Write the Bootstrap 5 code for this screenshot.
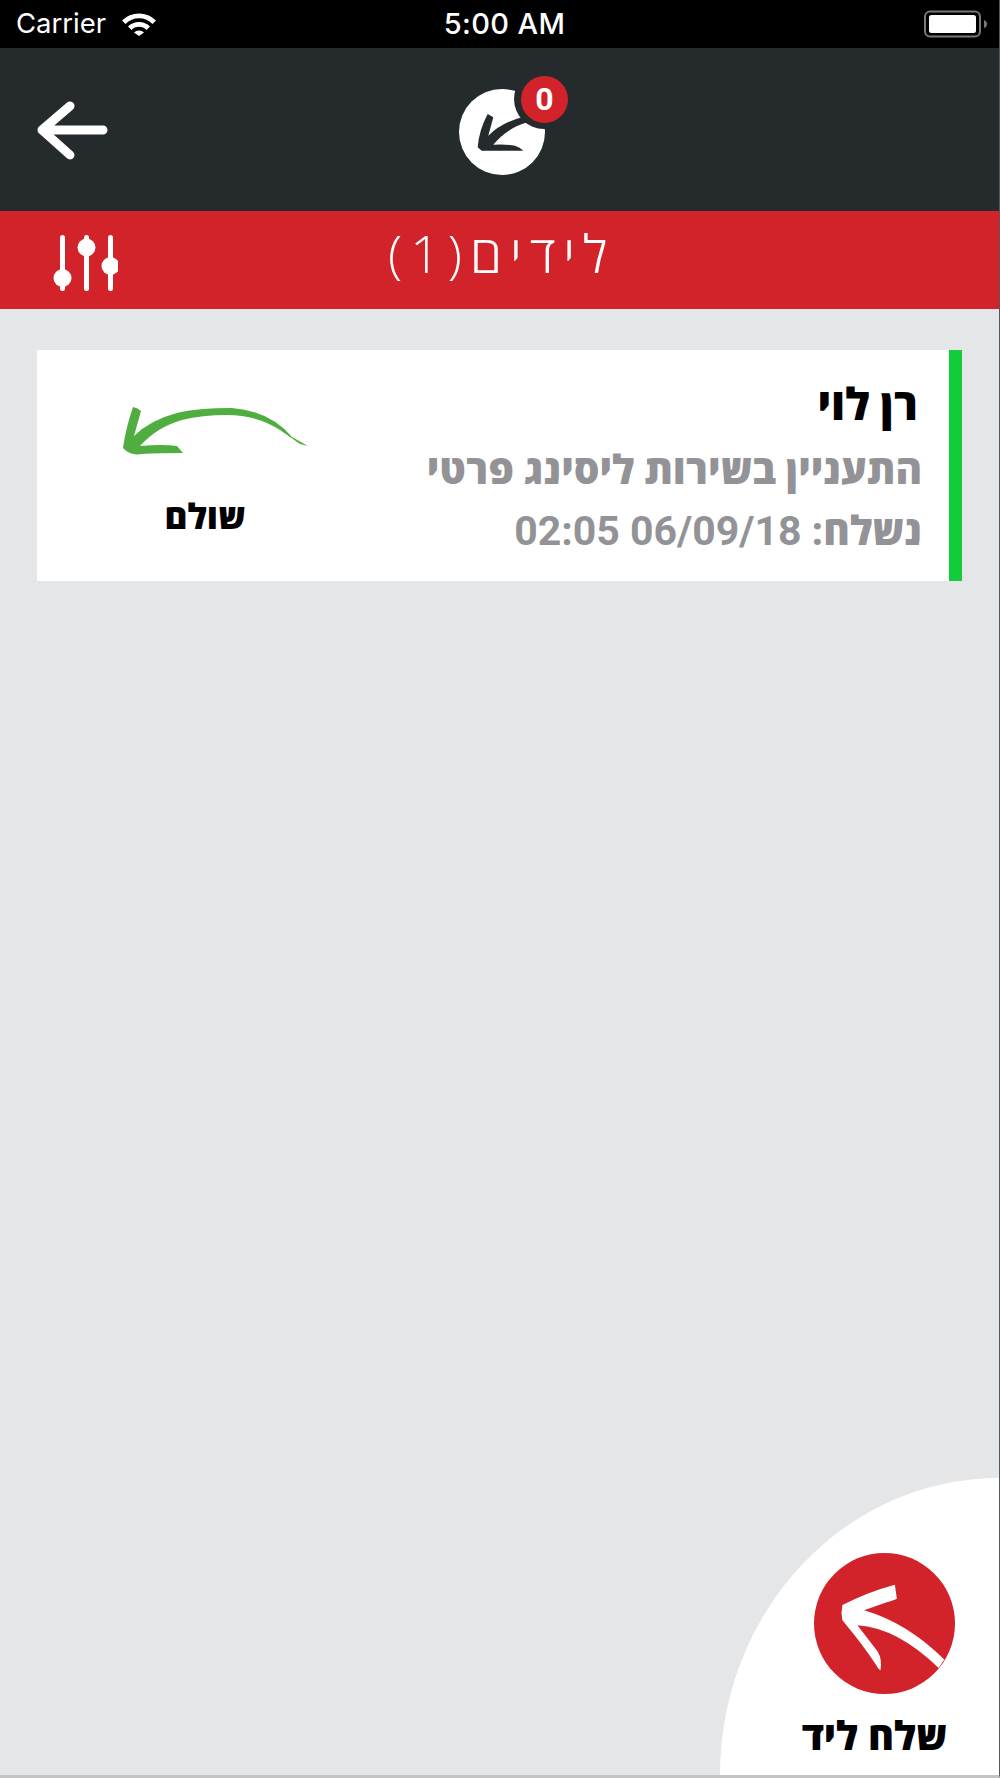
<!DOCTYPE html>
<html lang="he">
<head>
  <meta charset="UTF-8" />
  <meta name="viewport" content="width=device-width, initial-scale=1.0"/>
  <title>Leads</title>
  <link href="https://cdn.jsdelivr.net/npm/bootstrap@5.3.0/dist/css/bootstrap.min.css" rel="stylesheet"/>
  <style>
    html, body { height: 100%; }
    body { background: #e5e6e8; }
    .app-frame {
      height: 1778px;
      border-right: 1px solid #55585a;
      border-bottom: 3px solid #c3c4c6;
      font-family: Roboto, "Open Sans", "Liberation Sans", sans-serif;
    }
    .status-bar {
      height: 48px;
      background: #000;
      color: #fff;
      padding: 0 11px 0 16px;
      font-family: Inter, "Liberation Sans", sans-serif;
      font-size: 27.5px;
    }
    .status-side { width: 200px; }
    .status-time { font-weight: 500; font-size: 29px; letter-spacing: .4px; margin-left: 5px; }
    .top-bar { height: 163px; background: #252b2d; padding-left: 37px; }
    .logo-wrap { width: 100px; height: 110px; margin-left: 348px; margin-bottom: 14px; }
    .count-pill {
      top: 8px;
      left: 64px;
      width: 47px;
      height: 47px;
      background: #d2232a;
      color: #fff;
      font: 700 32px/47px Roboto, sans-serif;
    }
    .title-bar { height: 98px; background: #d2232a; color: #fff; padding-left: 50px; }
    .title-text {
      margin-left: 270px;
      font: 300 52px/1 "Open Sans", sans-serif;
      letter-spacing: 8px;
      padding-bottom: 14px;
    }
    .slider-icon { margin-top: 10px; }
    .lead-card {
      margin: 41px 37px 0;
      height: 231px;
      border-right: 13px solid #12cc3c !important;
    }
    .lead-side { width: 310px; padding-top: 57px; }
    .lead-arrow { margin-left: 48px; }
    .lead-status { font: 800 35px/1 "Open Sans", sans-serif; color: #000; margin: 41px 0 0 26px; }
    .lead-body { padding: 33px 27px 0 0; font-family: Roboto, "Open Sans", sans-serif; }
    .lead-name { font-size: 44px; font-weight: 800; line-height: 1; color: #000; margin: 0 4px 24px 0; }
    .lead-line { font-size: 40.4px; font-weight: 800; line-height: 1; color: #939397; margin-bottom: 20px; }
    .lead-date { font-weight: 700; font-size: 41px; }
    .send-fab {
      width: 279px;
      height: 297px;
      background: #fff;
      border-top-left-radius: 279px 297px;
      padding-top: 75px;
      padding-left: 50px;
    }
    .send-text { font: 800 39.5px/1 "Open Sans", sans-serif; color: #000; margin-top: 22px; padding-right: 20px; }
  </style>
</head>
<body>

  <div class="app-frame d-flex flex-column position-relative overflow-hidden">

    <!-- Status bar -->
    <div class="status-bar d-flex align-items-center justify-content-between">
      <div class="status-side d-flex align-items-center gap-3">
        <span>Carrier</span>
        <svg width="34" height="24" viewBox="0 0 34 24">
          <path d="M0 8.500 A24 24 0 0 1 34 8.500 L30.500 12 A19 19 0 0 0 3.500 12Z" fill="#fff"/>
          <path d="M6 14.500 A15.500 15.500 0 0 1 28 14.500 L24.500 18 A10.500 10.500 0 0 0 9.500 18Z" fill="#fff"/>
          <path d="M12 20.500 A7 7 0 0 1 22 20.500 L17 24Z" fill="#fff"/>
        </svg>
      </div>
      <span class="status-time">5:00 AM</span>
      <div class="status-side d-flex justify-content-end">
        <svg width="64" height="28" viewBox="0 0 64 28">
          <rect x="1" y="1.500" width="55" height="25" rx="5" fill="none" stroke="#77787a" stroke-width="2"/>
          <rect x="5" y="5" width="47" height="18" rx="2.500" fill="#fff"/>
          <path d="M60 10 Q63 11 63 14 Q63 17 60 18Z" fill="#77787a"/>
        </svg>
      </div>
    </div>

    <!-- Header -->
    <div class="top-bar d-flex align-items-center">
      <svg width="72" height="60" viewBox="0 0 72 60" fill="none" stroke="#fff" stroke-width="9" stroke-linecap="round" stroke-linejoin="round">
        <path d="M5 30 H66 M33 6 L5 30 L33 55"/>
      </svg>
      <div class="logo-wrap position-relative">
        <svg width="100" height="110" viewBox="0 0 100 110" class="d-block">
          <circle cx="45" cy="64" r="43" fill="#fff"/>
          <path d="M30.700 46 L36.300 49.300 L31.300 67.700 Q44 55 64.700 49.300 L70.300 54.300 Q50 60 36.300 76.700 Q50 76 58 77.700 Q63 79 66.300 82.700 L38 82.700 Q30 83 24.700 82.700 L20.700 79.300 Q22 62 30.700 46Z" fill="#252b2d"/>
          <circle cx="87" cy="31" r="30" fill="#252b2d"/>
        </svg>
        <span class="count-pill position-absolute rounded-circle text-center">0</span>
      </div>
    </div>

    <!-- Title -->
    <div class="title-bar d-flex align-items-center">
      <svg class="slider-icon" width="68" height="60" viewBox="0 0 68 60" fill="#fff">
        <rect x="10" y="0" width="5" height="56" rx="2.500"/>
        <rect x="34" y="0" width="5" height="56" rx="2.500"/>
        <rect x="58" y="0" width="5" height="56" rx="2.500"/>
        <circle cx="12.500" cy="43" r="9"/>
        <circle cx="36.500" cy="12.500" r="9"/>
        <circle cx="60.500" cy="31" r="9"/>
      </svg>
      <div class="title-text" dir="rtl">לידים(1)</div>
    </div>

    <!-- Lead -->
    <div class="lead-card card flex-row rounded-0 border-0 bg-white">
      <div class="lead-side d-flex flex-column align-items-center justify-content-start">
        <svg width="188" height="50" viewBox="0 0 188 50" class="lead-arrow d-block" fill="#4fae3f">
          <path d="M11 0 Q16 1 19 4 L12 29 Q28 13 55 6 Q75 1 110 1 Q148 4 170 30 L186 39 L178 37 Q168 30 158 23 Q135 8 105 8 Q80 8 60 13 Q35 20 18 39 Q40 37 55 39 L61 46 Q38 46 20 47 Q8 49 1 41 Q4 20 11 0Z"/>
        </svg>
        <div class="lead-status" dir="rtl">שולם</div>
      </div>
      <div class="lead-body flex-grow-1 text-end" dir="rtl">
        <div class="lead-name">רן לוי</div>
        <div class="lead-line">התעניין בשירות ליסינג פרטי</div>
        <div class="lead-line"><span dir="rtl">נשלח:</span> <span class="lead-date" dir="ltr">02:05 06/09/18</span></div>
      </div>
    </div>

    <!-- Send lead -->
    <div class="send-fab position-absolute bottom-0 end-0 d-flex flex-column align-items-center">
      <svg width="141" height="141" viewBox="340 281 422 422" class="d-block flex-shrink-0">
        <circle cx="551" cy="492" r="211" fill="#d2232a"/>
        <path d="M582 376 Q500 398 425 437 Q420 460 425 482 Q490 560 525 615 Q533 630 539 632 Q545 600 530 575 L470 497 Q590 505 713 625 L730 600 Q620 490 490 452 L560 428 Q580 422 588 418Z" fill="#fff"/>
      </svg>
      <div class="send-text" dir="rtl">שלח ליד</div>
    </div>

  </div>

  <script src="https://cdn.jsdelivr.net/npm/bootstrap@5.3.0/dist/js/bootstrap.bundle.min.js"></script>
</body>
</html>
